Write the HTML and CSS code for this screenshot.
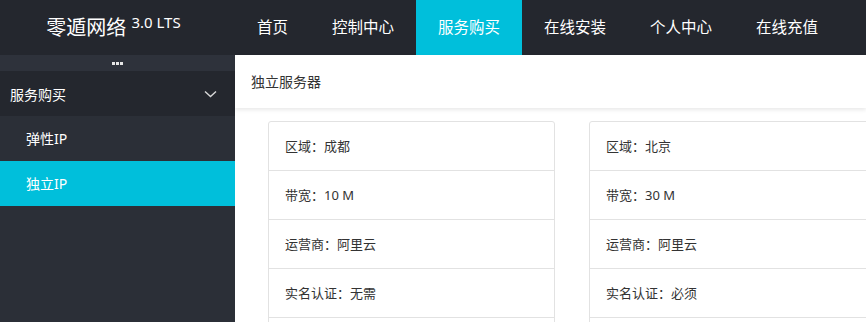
FILE: index.html
```html
<!DOCTYPE html>
<html lang="zh-CN">
<head>
<meta charset="utf-8">
<title>零遁网络</title>
<link rel="stylesheet" href="styles.css">
</head>
<body>
<div class="app">
  <header class="header">
    <div class="logo">零遁网络 <sup class="ver">3.0 LTS</sup></div>
    <nav class="topnav">
      <a class="nav-item">首页</a>
      <a class="nav-item">控制中心</a>
      <a class="nav-item active">服务购买</a>
      <a class="nav-item">在线安装</a>
      <a class="nav-item">个人中心</a>
      <a class="nav-item">在线充值</a>
    </nav>
  </header>
  <div class="body">
    <aside class="side">
      <div class="shrink"><span class="dot"></span><span class="dot"></span><span class="dot"></span></div>
      <div class="side-parent">
        <span>服务购买</span>
        <svg class="chev" width="13" height="8" viewBox="0 0 13 8"><path d="M1 1.5 L6.5 6.5 L12 1.5" fill="none" stroke="#d8d8d8" stroke-width="1.4"/></svg>
      </div>
      <div class="side-child">弹性IP</div>
      <div class="side-child active">独立IP</div>
    </aside>
    <main class="main">
      <div class="crumb">独立服务器</div>
      <div class="cards">
        <div class="card">
          <div class="row">区域：成都</div>
          <div class="row">带宽：10 M</div>
          <div class="row">运营商：阿里云</div>
          <div class="row">实名认证：无需</div>
          <div class="row"></div>
        </div>
        <div class="card">
          <div class="row">区域：北京</div>
          <div class="row">带宽：30 M</div>
          <div class="row">运营商：阿里云</div>
          <div class="row">实名认证：必须</div>
          <div class="row"></div>
        </div>
      </div>
    </main>
  </div>
</div>
</body>
</html>
```
FILE: styles.css
```css
* { box-sizing: border-box; }
html, body { margin: 0; padding: 0; }
body {
  width: 866px;
  height: 322px;
  overflow: hidden;
  font-family: "Noto Sans", "Noto Sans CJK SC", sans-serif;
  background: #fff;
}
.app { display: flex; flex-direction: column; height: 322px; }
.header {
  height: 55px;
  flex: none;
  display: flex;
  background: #24272e;
  color: #fff;
}
.logo {
  width: 235px;
  flex: none;
  text-align: center;
  font-size: 20px;
  line-height: 55px;
  padding-right: 8px;
  white-space: nowrap;
}
.ver {
  font-size: 15px;
  vertical-align: 0;
  position: relative;
  top: -7px;
}
.topnav { display: flex; height: 55px; }
.nav-item {
  display: block;
  padding: 0 22px;
  font-size: 15.5px;
  line-height: 55px;
  color: #fff;
}
.nav-item.active { background: #00bfdb; }
.body { flex: 1; display: flex; min-height: 0; }
.side {
  width: 235px;
  flex: none;
  background: #2b2f37;
  color: #fff;
  font-size: 14px;
}
.shrink {
  height: 16px;
  background: #2e323b;
  display: flex;
  justify-content: center;
  align-items: center;
  gap: 1px;
}
.dot {
  width: 3px;
  height: 3px;
  background: #e6e6e6;
}
.side-parent {
  height: 45px;
  background: #24272e;
  display: flex;
  align-items: center;
  justify-content: space-between;
  padding: 0 18px 0 10px;
}
.side-child {
  height: 45px;
  line-height: 45px;
  padding-left: 26px;
}
.side-child.active { background: #00bfdb; }
.main { flex: 1; min-width: 0; background: #fff; }
.crumb {
  height: 53px;
  line-height: 53px;
  padding-left: 16px;
  font-size: 14px;
  color: #333;
  background: #fff;
  box-shadow: 0 2px 4px rgba(0,0,0,0.09);
  position: relative;
}
.cards {
  display: grid;
  grid-template-columns: 287px 287px;
  column-gap: 34px;
  padding: 13px 0 0 33px;
}
.card {
  border: 1px solid #e2e2e2;
  border-radius: 3px;
  background: #fff;
}
.row {
  height: 49px;
  line-height: 48px;
  padding-left: 16px;
  font-size: 13px;
  color: #333;
  border-bottom: 1px solid #e2e2e2;
}
```
